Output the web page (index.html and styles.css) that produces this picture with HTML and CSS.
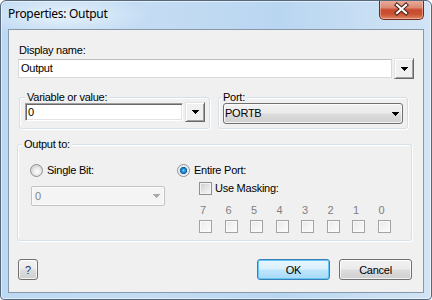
FILE: index.html
```html
<!DOCTYPE html>
<html>
<head>
<meta charset="utf-8">
<link rel="stylesheet" href="styles.css">
</head>
<body>
<div class="window">
  <div class="titlebar">
    <span class="title">Properties: Output</span>
    <div class="close">
      <svg width="43" height="19" viewBox="0 0 43 19">
        <path d="M17 5 L26 13 M26 5 L17 13" stroke="#4a2018" stroke-width="4.2" stroke-linecap="square" fill="none"/>
        <path d="M17 5 L26 13 M26 5 L17 13" stroke="#ffffff" stroke-width="2.2" stroke-linecap="square" fill="none"/>
      </svg>
    </div>
  </div>
  <div class="client">
    <div class="lbl-display">Display name:</div>
    <div class="row-display">
      <div class="field flat">Output</div>
      <div class="dd-btn"><svg class="arrow" width="7" height="4" viewBox="0 0 7 4"><path d="M0 0h7v1h-1v1h-1v1h-1v1h-1v-1h-1v-1h-1v-1h-1z"/></svg></div>
    </div>
    <div class="row-groups">
      <fieldset class="grp grp-var">
        <legend>Variable or value:</legend>
        <div class="var-row">
          <div class="field sunken">0</div>
          <div class="dd-btn"><svg class="arrow" width="7" height="4" viewBox="0 0 7 4"><path d="M0 0h7v1h-1v1h-1v1h-1v1h-1v-1h-1v-1h-1v-1h-1z"/></svg></div>
        </div>
      </fieldset>
      <fieldset class="grp grp-port">
        <legend>Port:</legend>
        <div class="combo">
          <span>PORTB</span>
          <svg class="arrow" width="7" height="4" viewBox="0 0 7 4"><path d="M0 0h7v1h-1v1h-1v1h-1v1h-1v-1h-1v-1h-1v-1h-1z"/></svg>
        </div>
      </fieldset>
    </div>
    <fieldset class="grp grp-out">
      <legend>Output to:</legend>
      <div class="out-grid">
        <div class="col-left">
          <div class="opt"><span class="radio"></span><span>Single Bit:</span></div>
          <div class="combo disabled">
            <span>0</span>
            <svg class="arrow" width="7" height="4" viewBox="0 0 7 4"><path d="M0 0h7v1h-1v1h-1v1h-1v1h-1v-1h-1v-1h-1v-1h-1z"/></svg>
          </div>
        </div>
        <div class="col-right">
          <div class="opt"><span class="radio on"></span><span>Entire Port:</span></div>
          <div class="opt mask"><span class="check"></span><span>Use Masking:</span></div>
          <div class="bits">
            <span class="digit">7</span><span class="digit">6</span><span class="digit">5</span><span class="digit">4</span>
            <span class="digit">3</span><span class="digit">2</span><span class="digit">1</span><span class="digit">0</span>
            <span class="check dis"></span><span class="check dis"></span><span class="check dis"></span><span class="check dis"></span>
            <span class="check dis"></span><span class="check dis"></span><span class="check dis"></span><span class="check dis"></span>
          </div>
        </div>
      </div>
    </fieldset>
    <div class="row-buttons">
      <button class="btn help">?</button>
      <span class="spacer"></span>
      <button class="btn default">OK</button>
      <button class="btn cancel">Cancel</button>
    </div>
  </div>
</div>
</body>
</html>
```
FILE: styles.css
```css
html, body {
  margin: 0;
  padding: 0;
  background: #ffffff;
}

.window {
  width: 432px;
  height: 300px;
  box-sizing: border-box;
  border: 1px solid #56687c;
  border-radius: 6px 6px 4px 4px;
  background:
    radial-gradient(ellipse 90px 22px at 60px 14px, rgba(235, 245, 253, 0.9), rgba(235, 245, 253, 0) 100%),
    linear-gradient(90deg, #bdd8f2 0%, #c4dcf3 35%, #b9d6f1 65%, #d2e4f5 100%);
  box-shadow: inset 0 0 0 1px rgba(255, 255, 255, 0.55);
  display: flex;
  flex-direction: column;
  overflow: hidden;
}

.titlebar {
  height: 28px;
  display: flex;
  align-items: flex-start;
}

.title {
  font-family: "Noto Sans", "Open Sans", sans-serif;
  font-size: 12px;
  letter-spacing: -0.3px;
  line-height: 16px;
  color: #000;
  padding: 5px 0 0 7px;
}

.close {
  margin: -1px 7px 0 auto;
  width: 45px;
  height: 20px;
  box-sizing: border-box;
  border: 1px solid #6b2b1f;
  border-top: none;
  border-radius: 0 0 5px 5px;
  background: linear-gradient(#eab0a2 0%, #dc8a72 40%, #c84a30 52%, #c9532f 75%, #e0866a 100%);
  box-shadow: inset 0 0 0 1px rgba(255, 220, 210, 0.45);
  display: flex;
}

.client {
  margin: 0 7px;
  height: 264px;
  box-sizing: border-box;
  border: 1px solid #8798ab;
  background: #f0f0f0;
  font-family: "Liberation Sans", Arial, sans-serif;
  font-size: 11px;
  letter-spacing: -0.25px;
  line-height: 13px;
  color: #000;
}

.lbl-display {
  margin: 14px 0 0 10px;
}

.row-display {
  display: flex;
  align-items: center;
  margin: 1px 0 0 9px;
  width: 396px;
  height: 21px;
}

.field {
  box-sizing: border-box;
  background: #fff;
  white-space: nowrap;
}

.field.flat {
  width: 374px;
  height: 19px;
  border: 1px solid #d9d9d9;
  border-top-color: #bdbdbd;
  padding-left: 2px;
  line-height: 17px;
}

.field.sunken {
  width: 158px;
  height: 18px;
  border: 1px solid;
  border-color: #a0a0a0 #ffffff #ffffff #a0a0a0;
  box-shadow: inset 1px 1px 0 #696969, inset -1px -1px 0 #e3e3e3;
  padding-left: 2px;
  line-height: 16px;
}

.dd-btn {
  margin-left: 2px;
  width: 20px;
  height: 21px;
  box-sizing: border-box;
  background: #f0f0f0;
  border: 1px solid;
  border-color: #e3e3e3 #696969 #696969 #e3e3e3;
  box-shadow: inset 1px 1px 0 #ffffff, inset -1px -1px 0 #a0a0a0;
  display: flex;
  align-items: center;
  justify-content: center;
}

.arrow {
  display: block;
  fill: #000;
  shape-rendering: crispEdges;
}

.row-groups {
  display: flex;
  align-items: stretch;
  gap: 8px;
  margin: 12px 0 0 10px;
}

fieldset.grp {
  margin: 0;
  padding: 0;
  border: 1px solid #d5dfe5;
  border-radius: 3px;
  box-shadow: inset 1px 1px 0 #ffffff, 1px 1px 0 #ffffff;
  min-width: 0;
}

fieldset.grp legend {
  font-size: 11px;
  line-height: 12px;
  padding: 0 2px;
  background: #f0f0f0;
}

fieldset.grp-var {
  width: 191px;
  box-sizing: border-box;
}

fieldset.grp-var legend {
  margin-left: 5px;
}

.var-row {
  display: flex;
  align-items: center;
  height: 20px;
  margin-top: -1px;
  padding: 0 4px 6px 5px;
}

.var-row .dd-btn {
  height: 20px;
}

fieldset.grp-port {
  width: 190px;
  box-sizing: border-box;
}

fieldset.grp-port legend {
  margin-left: 3px;
  padding: 0 1px;
}

.combo {
  display: flex;
  align-items: center;
  box-sizing: border-box;
  height: 21px;
  border: 1px solid #707070;
  border-radius: 3px;
  background: linear-gradient(#f2f2f2 0%, #ebebeb 48%, #dddddd 52%, #cfcfcf 100%);
  box-shadow: inset 0 0 0 1px rgba(255, 255, 255, 0.75);
  padding-left: 1px;
}

.combo .arrow {
  margin-left: auto;
  margin-right: 3px;
}

.grp-port .combo {
  width: 180px;
  margin: 0 4px 4px 4px;
}

fieldset.grp-out {
  width: 395px;
  box-sizing: border-box;
  margin: 9px 0 0 8px;
}

fieldset.grp-out legend {
  margin-left: 4px;
}

.out-grid {
  display: grid;
  grid-template-columns: 147px 1fr;
  padding: 14px 0 7px 12px;
}

.opt {
  display: flex;
  align-items: center;
  gap: 4px;
  height: 13px;
}

.radio {
  width: 13px;
  height: 13px;
  box-sizing: border-box;
  border-radius: 50%;
  border: 1px solid #8b8f95;
  background: radial-gradient(circle at 55% 60%, #fdfdfd 0, #eeeeee 3px, #d8d9db 5.5px);
  flex: none;
}

.radio.on {
  background: radial-gradient(circle at 50% 50%, #7fd9fb 0, #1f95d8 1.6px, #1b5f97 3.3px, #dfe3e6 3.9px, #f8f8f8 5.5px);
}

.combo.disabled {
  width: 134px;
  height: 20px;
  margin: 9px 0 0 1px;
  border-color: #c3c3c3;
  border-radius: 2px;
  background: #f4f4f4;
  box-shadow: inset 0 0 0 1px #fbfbfb;
  color: #838383;
  padding-left: 3px;
}

.combo.disabled .arrow {
  fill: #a8a8a8;
  margin-right: 4px;
}

.opt.mask {
  margin: 5px 0 0 22px;
  gap: 3px;
}

.check {
  width: 13px;
  height: 13px;
  box-sizing: border-box;
  border: 1px solid #8e8f8f;
  background: linear-gradient(135deg, #c9ccd1 0%, #e6e7e8 55%, #f8f8f8 100%);
  box-shadow: inset 0 0 0 1px #f4f4f4;
  flex: none;
}

.check.dis {
  border-color: #a3a3a3;
  background: linear-gradient(135deg, #e9e9e9 0%, #f5f5f5 60%, #fcfcfc 100%);
  box-shadow: inset 0 0 0 1px #fafafa;
}

.bits {
  display: grid;
  grid-template-columns: repeat(8, 13px);
  column-gap: 12.5px;
  row-gap: 3px;
  margin: 9px 0 0 22px;
}

.digit {
  color: #7f7f7f;
  line-height: 13px;
  padding-left: 1px;
}

.row-buttons {
  display: flex;
  align-items: center;
  gap: 9px;
  width: 394px;
  margin: 18px 0 0 9px;
}

.spacer {
  flex: 1;
}

.btn {
  height: 21px;
  box-sizing: border-box;
  border: 1px solid #707070;
  border-radius: 3px;
  background: linear-gradient(#f2f2f2 0%, #ebebeb 48%, #dddddd 52%, #cfcfcf 100%);
  box-shadow: inset 0 0 0 1px rgba(255, 255, 255, 0.75);
  font-family: "Liberation Sans", Arial, sans-serif;
  font-size: 11px;
  letter-spacing: -0.25px;
  color: #000;
  padding: 0;
  margin: 0;
}

.btn.help {
  width: 20px;
  color: #1c2f5c;
}

.btn.default {
  width: 73px;
  border-color: #3c7fb1;
  background: linear-gradient(#eaf6fd 0%, #d9f0fc 48%, #bee6fd 52%, #a7d9f5 100%);
  box-shadow: inset 0 0 0 1px #62c6fa;
}

.btn.cancel {
  width: 73px;
}
```
